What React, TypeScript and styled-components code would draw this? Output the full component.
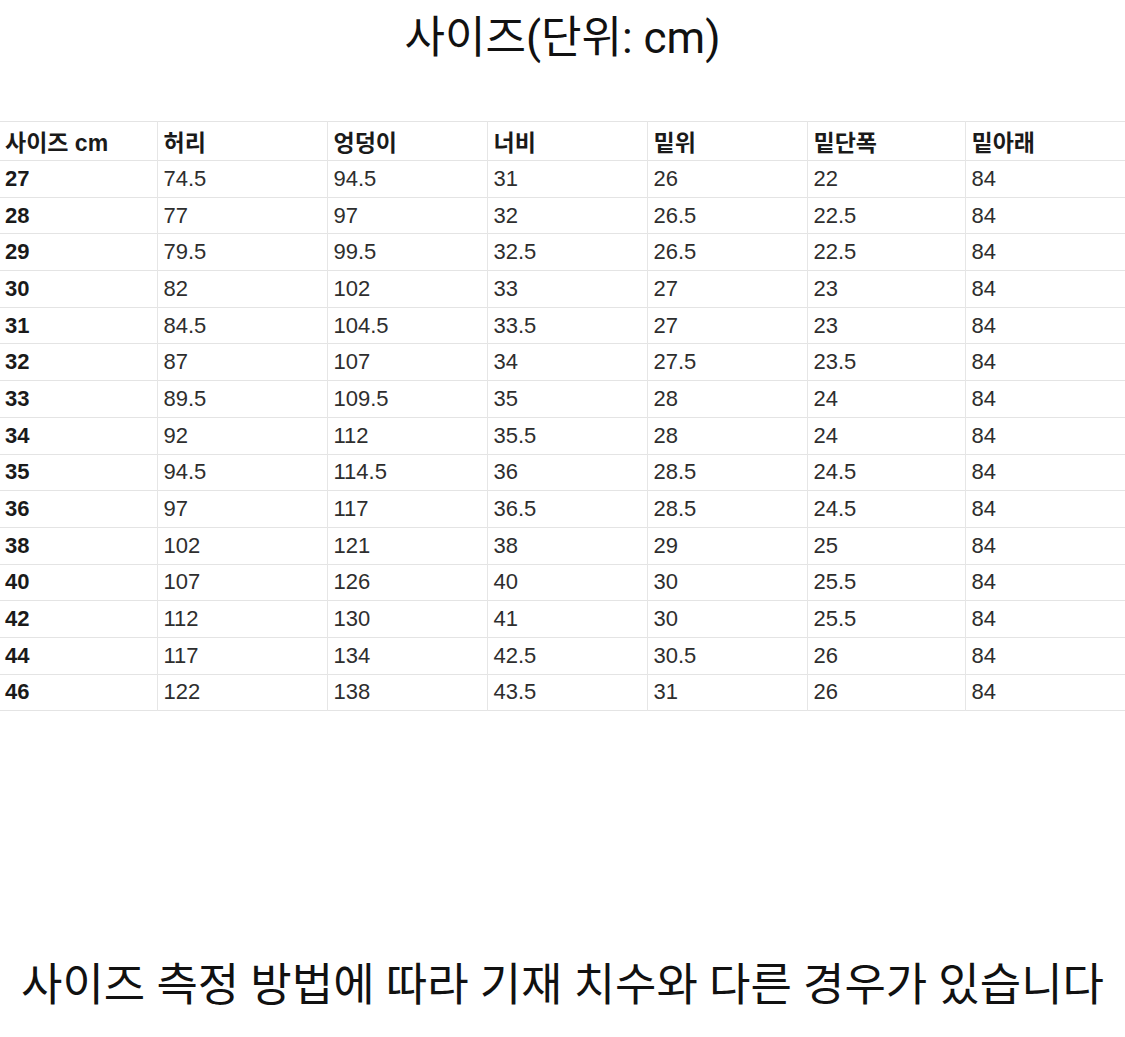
import React from "react";
import styled, { createGlobalStyle } from "styled-components";

const Global = createGlobalStyle`
  html, body { margin: 0; padding: 0; background: #ffffff; }
  body { font-family: Roboto, "Noto Sans CJK KR", sans-serif; color: #111; }
`;

const Page = styled.div`
  width: 1125px;
  height: 1037px;
  display: flex;
  flex-direction: column;
  background: #fff;
  overflow: hidden;
`;

const Title = styled.h1`
  margin: 0;
  height: 121px;
  padding-top: 9px;
  box-sizing: border-box;
  text-align: center;
  font-family: Roboto, "Noto Sans CJK KR", sans-serif;
  font-weight: 400;
  font-size: 44px;
  line-height: 58px;
  color: #111;
`;

const Table = styled.table`
  width: 1125px;
  border-collapse: collapse;
  table-layout: fixed;
  font-family: "Liberation Sans", Arial, "Noto Sans CJK KR", sans-serif;
  font-size: 22px;
  color: #2a2a2a;
`;

const Row = styled.tr<{ $head?: boolean }>`
  height: ${(p) => (p.$head ? "39px" : "36.7px")};
  border-top: 1px solid #e4e4e4;
  border-bottom: 1px solid #e4e4e4;
`;

const Cell = styled.td<{ $bold?: boolean }>`
  padding: 0 0 0 6px;
  vertical-align: middle;
  font-weight: ${(p) => (p.$bold ? 700 : 400)};
  color: ${(p) => (p.$bold ? "#1a1a1a" : "#2e2e2e")};
  border-left: 1px solid #e6e6e6;
  white-space: nowrap;
  &:first-child { border-left: none; padding-left: 5px; }
`;

const HeadCell = styled(Cell).attrs({ as: "th" })`
  text-align: left;
  font-weight: 700;
  color: #1a1a1a;
  font-size: 23px;
  font-family: "Liberation Sans", Arial, "Noto Sans CJK KR", sans-serif;
`;

const Footer = styled.p`
  margin: 0;
  margin-top: auto;
  padding-bottom: 21px;
  text-align: center;
  font-family: Roboto, "Noto Sans CJK KR", sans-serif;
  font-size: 45px;
  line-height: 60px;
  color: #111;
  white-space: nowrap;
`;

const widths = [157, 170, 160, 160, 160, 158, 160];
const headers = ["사이즈 cm", "허리", "엉덩이", "너비", "밑위", "밑단폭", "밑아래"];
const rows: string[][] = [
  ["27", "74.5", "94.5", "31", "26", "22", "84"],
  ["28", "77", "97", "32", "26.5", "22.5", "84"],
  ["29", "79.5", "99.5", "32.5", "26.5", "22.5", "84"],
  ["30", "82", "102", "33", "27", "23", "84"],
  ["31", "84.5", "104.5", "33.5", "27", "23", "84"],
  ["32", "87", "107", "34", "27.5", "23.5", "84"],
  ["33", "89.5", "109.5", "35", "28", "24", "84"],
  ["34", "92", "112", "35.5", "28", "24", "84"],
  ["35", "94.5", "114.5", "36", "28.5", "24.5", "84"],
  ["36", "97", "117", "36.5", "28.5", "24.5", "84"],
  ["38", "102", "121", "38", "29", "25", "84"],
  ["40", "107", "126", "40", "30", "25.5", "84"],
  ["42", "112", "130", "41", "30", "25.5", "84"],
  ["44", "117", "134", "42.5", "30.5", "26", "84"],
  ["46", "122", "138", "43.5", "31", "26", "84"],
];

export default function App() {
  return (
    <Page>
      <Global />
      <Title>사이즈(단위: cm)</Title>
      <Table>
        <colgroup>
          {widths.map((w, i) => (
            <col key={i} style={{ width: w }} />
          ))}
        </colgroup>
        <thead>
          <Row $head>
            {headers.map((h) => (
              <HeadCell key={h}>{h}</HeadCell>
            ))}
          </Row>
        </thead>
        <tbody>
          {rows.map((r) => (
            <Row key={r[0]}>
              {r.map((v, i) => (
                <Cell key={i} $bold={i === 0}>
                  {v}
                </Cell>
              ))}
            </Row>
          ))}
        </tbody>
      </Table>
      <Footer>사이즈 측정 방법에 따라 기재 치수와 다른 경우가 있습니다</Footer>
    </Page>
  );
}
